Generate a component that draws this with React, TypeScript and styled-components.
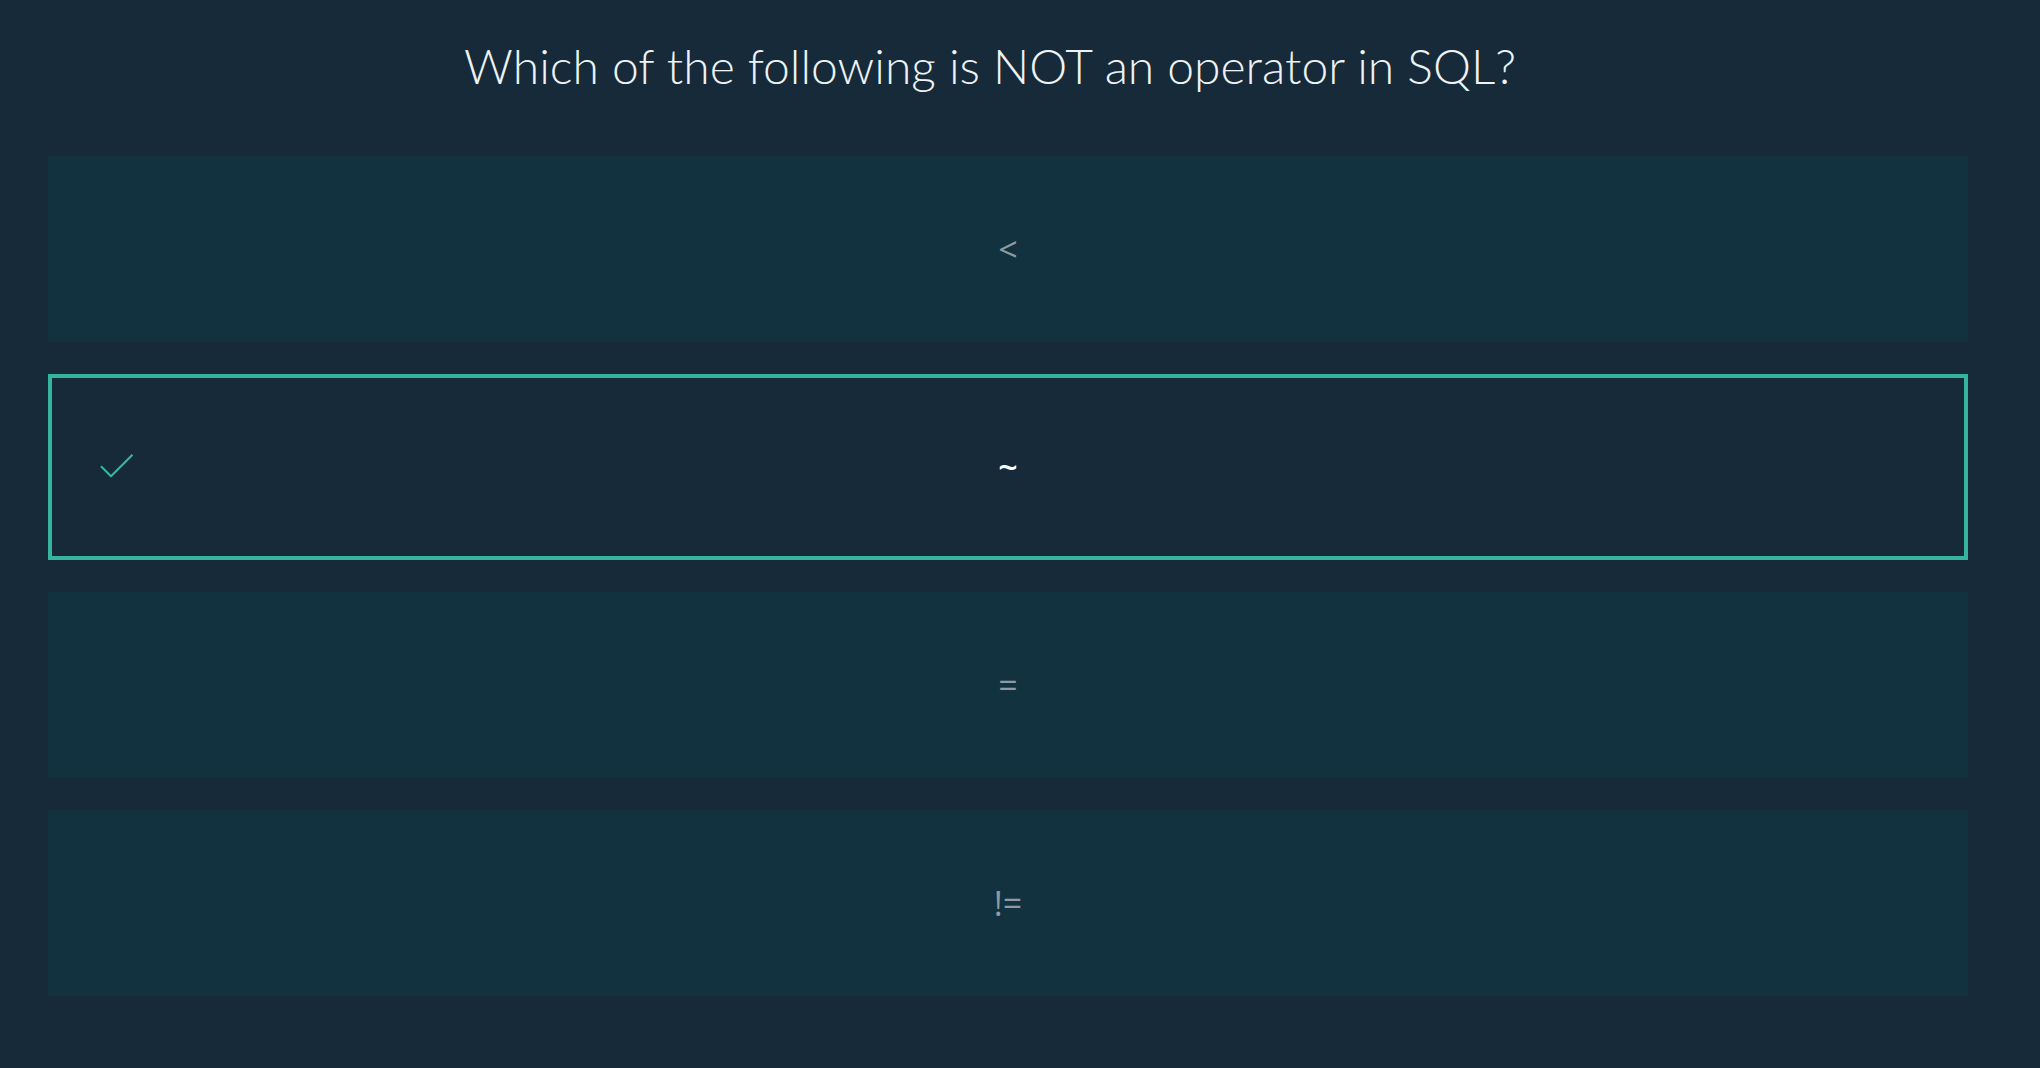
import React from "react";
import styled, { createGlobalStyle } from "styled-components";

const GlobalStyle = createGlobalStyle`
  html, body {
    margin: 0;
    padding: 0;
    background-color: #162a39;
  }
  body {
    font-family: "Lato", "Open Sans", sans-serif;
  }
`;

const Page = styled.div`
  min-height: 100vh;
  box-sizing: border-box;
  padding: 0 72px 0 48px;
  background-color: #162a39;
`;

const Question = styled.h1`
  margin: 0;
  padding: 36px 36px 0 0;
  height: 156px;
  box-sizing: border-box;
  text-align: center;
  font-family: "Lato", sans-serif;
  font-weight: 300;
  font-size: 48px;
  line-height: 60px;
  color: #eef2f4;
`;

const Options = styled.div`
  display: flex;
  flex-direction: column;
  gap: 32px;
`;

const Option = styled.div<{ $selected?: boolean }>`
  position: relative;
  height: 186px;
  box-sizing: border-box;
  display: flex;
  align-items: center;
  justify-content: center;
  background-color: ${(p) => (p.$selected ? "#162a39" : "#12323f")};
  border: 4px solid ${(p) => (p.$selected ? "#35b59e" : "transparent")};
  font-family: "Open Sans", sans-serif;
  font-size: 34px;
  font-weight: ${(p) => (p.$selected ? 600 : 400)};
  color: ${(p) => (p.$selected ? "#ffffff" : "#8d9ba3")};
  cursor: pointer;
`;

const Check = styled.svg`
  position: absolute;
  left: 48px;
  top: 50%;
  transform: translateY(-55%);
`;

const options = [
  { label: "<", selected: false },
  { label: "~", selected: true },
  { label: "=", selected: false },
  { label: "!=", selected: false },
];

export default function App() {
  return (
    <>
      <GlobalStyle />
      <Page>
        <Question>Which of the following is NOT an operator in SQL?</Question>
        <Options>
          {options.map((o) => (
            <Option key={o.label} $selected={o.selected}>
              {o.selected && (
                <Check width="34" height="24" viewBox="0 0 34 24" fill="none">
                  <path
                    d="M1 12.5 L11 22.5 L32.5 1"
                    stroke="#35b59e"
                    strokeWidth="2.2"
                  />
                </Check>
              )}
              {o.label}
            </Option>
          ))}
        </Options>
      </Page>
    </>
  );
}
